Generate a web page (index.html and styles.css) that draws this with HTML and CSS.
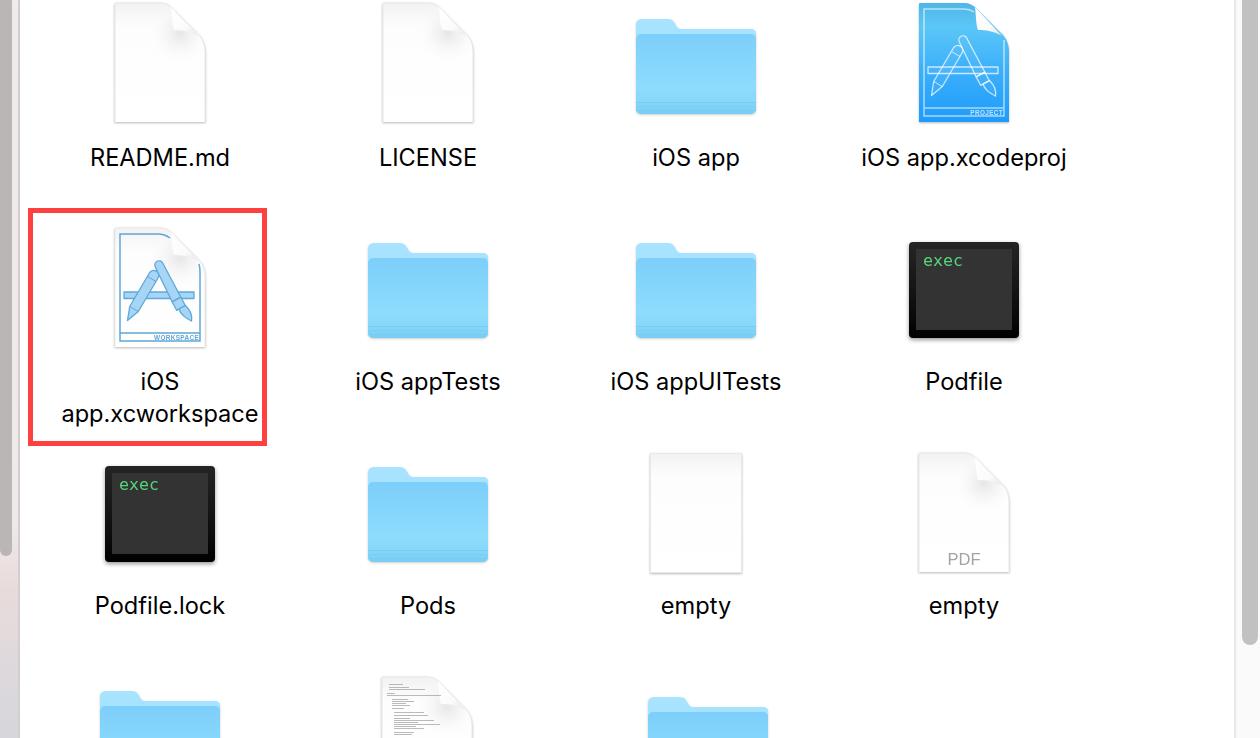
FILE: index.html
```html
<!DOCTYPE html>
<html lang="en">
<head>
<meta charset="utf-8">
<title>Finder</title>
<link rel="stylesheet" href="styles.css">
</head>
<body>
<svg class="defs" width="0" height="0" aria-hidden="true">
  <defs>
    <linearGradient id="gDoc" x1="0" y1="0" x2="0" y2="1">
      <stop offset="0" stop-color="#f2f2f2"/><stop offset=".2" stop-color="#fdfdfd"/><stop offset="1" stop-color="#fff"/>
    </linearGradient>
    <radialGradient id="gCurl" gradientUnits="userSpaceOnUse" cx="66" cy="30" r="32">
      <stop offset="0" stop-color="#d4d4d4" stop-opacity=".55"/><stop offset=".45" stop-color="#e8e8e8" stop-opacity=".35"/><stop offset="1" stop-color="#fff" stop-opacity="0"/>
    </radialGradient>
    <linearGradient id="gFold" x1="0" y1="0" x2="1" y2="1">
      <stop offset="0" stop-color="#fff"/><stop offset=".62" stop-color="#fbfbfb"/><stop offset="1" stop-color="#e4e4e4"/>
    </linearGradient>
    <linearGradient id="gProj" x1="0" y1="0" x2="0" y2="1">
      <stop offset="0" stop-color="#4fb7e8"/><stop offset=".2" stop-color="#5cc6f7"/><stop offset=".55" stop-color="#3cb0fa"/><stop offset="1" stop-color="#1e9bfb"/>
    </linearGradient>
    <linearGradient id="gBack" x1="0" y1="0" x2="0" y2="1">
      <stop offset="0" stop-color="#a9e4ff"/><stop offset="1" stop-color="#9fe0ff"/>
    </linearGradient>
    <linearGradient id="gFront" x1="0" y1="0" x2="0" y2="1">
      <stop offset="0" stop-color="#7ccffa"/><stop offset=".68" stop-color="#8edcfd"/><stop offset=".85" stop-color="#86d7fa"/><stop offset="1" stop-color="#78cdf3"/>
    </linearGradient>
    <linearGradient id="gExec" x1="0" y1="0" x2="0" y2="1">
      <stop offset="0" stop-color="#252525"/><stop offset=".5" stop-color="#141414"/><stop offset="1" stop-color="#000"/>
    </linearGradient>

    <path id="docShape" d="M2 0H46C51 0 55 2 58 5L84 31C88 35 91 41 91 49V119H1V1Q1 0 2 0Z"/>
    <g id="doc">
      <use href="#docShape" fill="url(#gDoc)"/>
      <use href="#docShape" fill="url(#gCurl)"/>
      <path class="doc-edge" d="M1 119V1Q1 0 2 0H46C51 0 55 2 58 5L84 31C88 35 91 41 91 49V119"/>
      <path fill="url(#gFold)" d="M57 4C58 12 58 22 60 27C68 27 76 28 84 33Z"/>
    </g>

    <g id="folder">
      <path fill="url(#gBack)" d="M4 25Q4 19 10 19H36Q40 19 42 22L45 27Q46 29 49 29H119Q124 29 124 34V60H4Z"/>
      <rect x="4" y="34" width="120" height="80" rx="5" fill="url(#gFront)"/>
      <rect class="fold-line" x="4" y="102" width="120" height="1"/>
      <rect class="fold-line" x="4" y="106" width="120" height="1"/>
      <rect class="fold-line" x="4" y="110" width="120" height="1"/>
    </g>

    <g id="exec">
      <rect x="9" y="18" width="110" height="96" rx="4" fill="url(#gExec)"/>
      <rect x="16" y="25" width="96" height="81" fill="#333"/>
      <text class="exec-text" x="23" y="42">exec</text>
    </g>

    <g id="tools">
      <rect class="tool" x="10" y="64" width="70" height="6.5"/>
      <path class="tool" d="M35.700 44.500A5 5 0 0 1 44.300 49.500L24.300 83.500L13.500 92.500L15.700 78.500Z"/>
      <path class="tool-line" d="M33.500 48.500L42 53.500M15.700 78.500L24.300 83.500"/>
      <path class="tool" d="M41.300 39A4.200 4.200 0 0 1 48.700 35L66.900 69.200L58.100 73.800Z"/>
      <path class="tool" d="M58.100 73.800L66.900 69.200L71.400 77.700L62.600 82.300Z"/>
      <path class="tool" d="M65 81L71.500 77.500C76 82 78.500 88 77.500 93C72 90 66.500 87 65 81Z"/>
    </g>

    <g id="greek">
      <rect x="26" y="12" width="14" height="1"/><rect x="26" y="15" width="20" height="1"/>
      <rect x="26" y="17" width="36" height="1"/><rect x="24" y="21" width="8" height="1"/>
      <rect x="24" y="23" width="54" height="1"/><rect x="29" y="27" width="16" height="1"/>
      <rect x="29" y="29" width="22" height="1"/><rect x="29" y="31" width="14" height="1"/>
      <rect x="29" y="33" width="18" height="1"/><rect x="29" y="36" width="12" height="1"/>
      <rect x="31" y="40" width="30" height="1"/><rect x="31" y="43" width="34" height="1"/>
      <rect x="31" y="46" width="16" height="1"/><rect x="31" y="48" width="40" height="1"/>
      <rect x="31" y="50" width="24" height="1"/><rect x="31" y="52" width="46" height="1"/>
      <rect x="31" y="54" width="22" height="1"/><rect x="31" y="56" width="30" height="1"/>
      <rect x="31" y="60" width="20" height="1"/><rect x="31" y="62" width="18" height="1"/>
    </g>
  </defs>
</svg>

<div class="window">
  <div class="sidebar-edge"><div class="side-thumb"></div></div>
  <main class="files">
    <div class="grid">
      <figure class="item">
        <svg class="icon doc-icon" viewBox="0 0 128 128"><use href="#doc" transform="translate(18 3)"/></svg>
        <figcaption class="name">README.md</figcaption>
      </figure>
      <figure class="item">
        <svg class="icon doc-icon" viewBox="0 0 128 128"><use href="#doc" transform="translate(18 3)"/></svg>
        <figcaption class="name">LICENSE</figcaption>
      </figure>
      <figure class="item">
        <svg class="icon" viewBox="0 0 128 128"><use href="#folder"/></svg>
        <figcaption class="name">iOS app</figcaption>
      </figure>
      <figure class="item">
        <svg class="icon doc-icon" viewBox="0 0 128 128">
          <g transform="translate(18 3)">
            <use href="#docShape" fill="url(#gProj)"/>
            <path fill="url(#gFold)" d="M57 4C58 12 58 22 60 27C68 27 76 28 84 33Z"/>
            <path class="frame frame-project" d="M56 9C53 7 50 6 46 6H6V113H86V45C86 42 86 39 86 37M6 105H86"/>
            <g class="tools-project"><use href="#tools"/></g>
            <text class="badge badge-project" x="85" y="111.500">PROJECT</text>
          </g>
        </svg>
        <figcaption class="name">iOS app.xcodeproj</figcaption>
      </figure>

      <figure class="item">
        <svg class="icon doc-icon" viewBox="0 0 128 128">
          <g transform="translate(18 4)">
            <use href="#doc"/>
            <path class="frame frame-workspace" d="M56 10C52 7 48 6 44 6H6V113H86V45C86 42 86 39 85 36M6 105H86"/>
            <g class="tools-workspace"><use href="#tools"/></g>
            <text class="badge badge-workspace" x="85" y="111.500">WORKSPACE</text>
          </g>
        </svg>
        <figcaption class="name">iOS app.xcworkspace</figcaption>
        <div class="highlight"></div>
      </figure>
      <figure class="item">
        <svg class="icon" viewBox="0 0 128 128"><use href="#folder"/></svg>
        <figcaption class="name">iOS appTests</figcaption>
      </figure>
      <figure class="item">
        <svg class="icon" viewBox="0 0 128 128"><use href="#folder"/></svg>
        <figcaption class="name">iOS appUITests</figcaption>
      </figure>
      <figure class="item">
        <svg class="icon exec-icon" viewBox="0 0 128 128"><use href="#exec"/></svg>
        <figcaption class="name">Podfile</figcaption>
      </figure>

      <figure class="item">
        <svg class="icon exec-icon" viewBox="0 0 128 128"><use href="#exec"/></svg>
        <figcaption class="name">Podfile.lock</figcaption>
      </figure>
      <figure class="item">
        <svg class="icon" viewBox="0 0 128 128"><use href="#folder"/></svg>
        <figcaption class="name">Pods</figcaption>
      </figure>
      <figure class="item">
        <svg class="icon doc-icon" viewBox="0 0 128 128"><rect x="18" y="5" width="92" height="120" fill="url(#gDoc)"/><rect class="doc-edge" x="18.500" y="5.500" width="91" height="119"/></svg>
        <figcaption class="name">empty</figcaption>
      </figure>
      <figure class="item">
        <svg class="icon doc-icon" viewBox="0 0 128 128">
          <g transform="translate(18 5)">
            <use href="#doc"/>
            <text class="pdf" x="46" y="112">PDF</text>
          </g>
        </svg>
        <figcaption class="name">empty</figcaption>
      </figure>

      <figure class="item">
        <svg class="icon" viewBox="0 0 128 128"><use href="#folder"/></svg>
      </figure>
      <figure class="item">
        <svg class="icon doc-icon" viewBox="0 0 128 128">
          <g transform="translate(17 5)">
            <use href="#doc"/>
            <use class="greek" href="#greek" transform="translate(-18 -5)"/>
          </g>
        </svg>
      </figure>
      <figure class="item item-shifted">
        <svg class="icon" viewBox="0 0 128 128"><use href="#folder"/></svg>
      </figure>
    </div>
  </main>
  <div class="scroll-track"><div class="scroll-thumb"></div></div>
</div>
</body>
</html>
```

FILE: styles.css
```css
* { box-sizing: border-box; }
html, body { margin: 0; height: 100%; background: #fff; overflow: hidden; }
.defs { display: block; width: 0; height: 0; }

.window { display: flex; width: 1260px; height: 738px; overflow: hidden; }

.sidebar-edge {
  flex: 0 0 20px;
  background: linear-gradient(180deg, #efebe9 0, #efeae8 70%, #e8dcdb 80%, #dcd8dc 92%, #d6d6dc 100%);
  border-right: 2px solid #d3cfcf;
}
.side-thumb { width: 12px; height: 556px; background: #b9b6b5; border-radius: 0 0 6px 6px; }

.files { flex: 1; min-width: 0; padding-left: 6px; overflow: hidden; }
.grid { display: grid; grid-template-columns: repeat(4, 268px); grid-auto-rows: 224px; }

.item { position: relative; margin: 0; display: flex; flex-direction: column; align-items: center; }
.icon { flex: none; display: block; width: 128px; height: 128px; overflow: visible; filter: drop-shadow(0 1px 1px rgba(0,0,0,.2)); }
.doc-icon { filter: drop-shadow(0 1px 1px rgba(0,0,0,.28)); }
.exec-icon { filter: drop-shadow(0 2px 2px rgba(0,0,0,.4)); }
.item-shifted { padding: 6px 0 0 24px; }

.name {
  margin-top: 14px;
  max-width: 232px;
  font: 23.6px/32px Inter, "Liberation Sans", sans-serif;
  color: #000;
  text-align: center;
}

.highlight {
  position: absolute;
  left: 2px; top: -16px;
  width: 239px; height: 238px;
  border: 5px solid #fe4040;
}

.doc-edge { fill: none; stroke: #e9e9e9; stroke-width: 1; }
.fold-line { fill: #79cdf3; }
.exec-text { font: 16.6px "DejaVu Sans Mono", monospace; fill: #55d57c; }
.pdf { font: 16.5px "Liberation Sans", sans-serif; fill: #a3a3a3; text-anchor: middle; }

.frame { fill: none; stroke-width: 1.5; }
.frame-project { stroke: rgba(255,255,255,.6); }
.frame-workspace { stroke: #5fa6d6; }
.badge { font: bold 6.4px "Liberation Sans", sans-serif; letter-spacing: .35px; text-anchor: end; }
.badge-project { fill: rgba(255,255,255,.7); }
.badge-workspace { fill: #5fa6d4; }

.tool { fill: var(--tool-fill); stroke: var(--tool-stroke); stroke-width: 1.3; stroke-linejoin: round; }
.tool-line { fill: none; stroke: var(--tool-stroke); stroke-width: 1; }
.tools-workspace { --tool-fill: #a6d5f6; --tool-stroke: #5fa8d9; }
.tools-project { --tool-fill: rgba(255,255,255,.05); --tool-stroke: rgba(255,255,255,.72); }

.greek { fill: #8f8f8f; opacity: .6; }

.scroll-track {
  flex: 0 0 26px;
  background: #fafafa;
  border-left: 2px solid #e8e8e8;
  padding-left: 6px;
}
.scroll-thumb { width: 16px; height: 645px; background: #c1c1c1; border-radius: 0 0 8px 8px; }
```
